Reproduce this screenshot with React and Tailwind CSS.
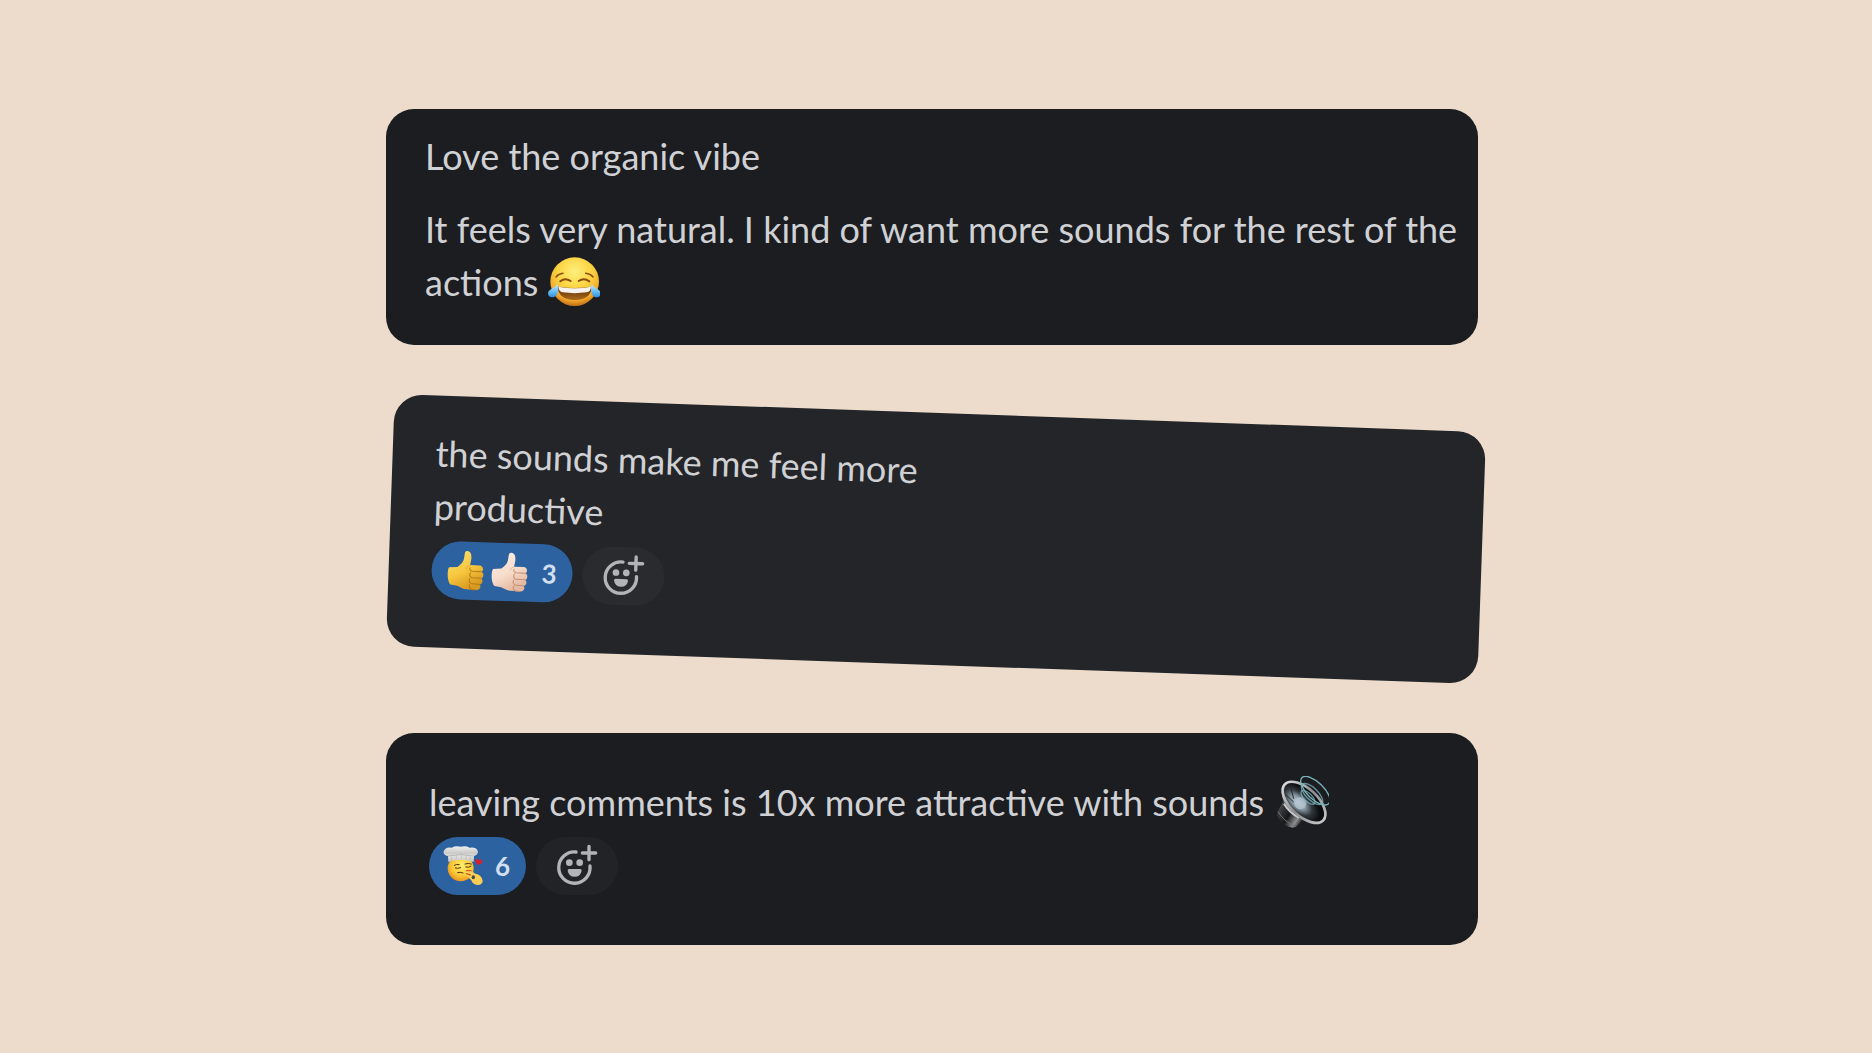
import { useId } from "react";

function JoyEmoji() {
  const id = useId();
  const face = `${id}f`;
  const tear = `${id}t`;
  const mouth = `${id}m`;
  return (
    <svg role="img" aria-label="face with tears of joy" viewBox="54 46 156 156" className="inline-block size-[52px] align-top">
      <defs>
        <radialGradient id={face} cx="0.5" cy="0.3" r="0.72">
          <stop offset="0" stopColor="#fdf07c" />
          <stop offset="0.5" stopColor="#fbd23f" />
          <stop offset="0.82" stopColor="#f0a52c" />
          <stop offset="1" stopColor="#b8650f" />
        </radialGradient>
        <linearGradient id={tear} x1="0" y1="0" x2="0" y2="1">
          <stop offset="0" stopColor="#c4e9fb" />
          <stop offset="0.5" stopColor="#6fc2f3" />
          <stop offset="1" stopColor="#2f8fe0" />
        </linearGradient>
        <linearGradient id={mouth} x1="0" y1="0" x2="0" y2="1">
          <stop offset="0" stopColor="#5a2a08" />
          <stop offset="1" stopColor="#a86a1a" />
        </linearGradient>
      </defs>
      <circle cx="134" cy="123" r="73" fill={`url(#${face})`} />
      <g fill="none" stroke="#8a4d0d" strokeWidth="4.5" strokeLinecap="round">
        <path d="M78 109Q86 99 99 98" />
        <path d="M167 98Q181 99 189 109" />
        <path d="M91 122Q105 110 122 121" strokeWidth="6" />
        <path d="M146 121Q162 110 178 122" strokeWidth="6" />
      </g>
      <path d="M83 138Q134 146 185 138Q184 176 134 178Q85 176 83 138Z" fill={`url(#${mouth})`} />
      <path d="M85 138Q134 147 183 138Q182 153 170 155Q134 160 98 155Q86 152 85 138Z" fill="#f8f3ef" />
      <path d="M82 131C88 147 84 168 68 170C54 171 50 156 59 149C67 143 76 139 82 131Z" fill={`url(#${tear})`} />
      <path d="M185 131C180 147 184 168 198 170C213 171 216 156 207 149C199 143 190 139 185 131Z" fill={`url(#${tear})`} />
    </svg>
  );
}

function SpeakerEmoji() {
  const id = useId();
  const rim = `${id}r`;
  const cone = `${id}c`;
  const base = `${id}b`;
  return (
    <svg role="img" aria-label="speaker with sound waves" viewBox="54 33 156 156" className="ml-1 inline-block size-[52px] align-top">
      <defs>
        <linearGradient id={rim} x1="0" y1="0" x2="1" y2="0">
          <stop offset="0" stopColor="#d6d7d8" />
          <stop offset="0.5" stopColor="#8b8c8e" />
          <stop offset="1" stopColor="#c4c5c5" />
        </linearGradient>
        <radialGradient id={cone} cx="0.42" cy="0.65" r="0.5">
          <stop offset="0" stopColor="#c5d4df" />
          <stop offset="0.35" stopColor="#8796a1" />
          <stop offset="0.65" stopColor="#30363b" />
          <stop offset="1" stopColor="#0c0d0f" />
        </radialGradient>
        <linearGradient id={base} x1="0" y1="0" x2="1" y2="0.6">
          <stop offset="0" stopColor="#d5d5d5" />
          <stop offset="0.2" stopColor="#3d3e40" />
          <stop offset="0.55" stopColor="#17181a" />
          <stop offset="0.85" stopColor="#8d8e90" />
          <stop offset="1" stopColor="#333" />
        </linearGradient>
      </defs>
      <path d="M72 112L57 139Q51 151 62 165Q77 185 101 188Q112 188 119 178L134 162Z" fill={`url(#${base})`} />
      <path d="M58 140Q71 168 111 185" fill="none" stroke="#717274" strokeWidth="3" />
      <path d="M69 78Q67 116 95 145Q115 164 139 162L185 168L166 148L96 88Z" fill="#67696c" />
      <path d="M75 116Q91 143 120 158" fill="none" stroke="#c9cacb" strokeWidth="6" />
      <ellipse cx="135" cy="112" rx="79" ry="41" transform="rotate(43 135 112)" fill={`url(#${cone})`} stroke={`url(#${rim})`} strokeWidth="8" />
      <path d="M104 101L94 62M104 111L79 88" stroke="#25292d" strokeWidth="3" />
      <circle cx="124" cy="115" r="18" fill="#b4c5d1" fillOpacity="0.75" />
      <g fill="none" stroke="#78b3bb" strokeWidth="4">
        <ellipse cx="169" cy="77" rx="56" ry="25" transform="rotate(44 169 77)" />
        <ellipse cx="159" cy="87" rx="41" ry="18" transform="rotate(44 159 87)" strokeOpacity="0.8" />
        <ellipse cx="147" cy="97" rx="27" ry="12" transform="rotate(44 147 97)" strokeOpacity="0.8" />
      </g>
    </svg>
  );
}

function ThumbEmoji({ label, light, base, shade, line }) {
  const id = useId();
  return (
    <svg role="img" aria-label={label} viewBox="78 65 120 120" className="size-10">
      <defs>
        <linearGradient id={id} x1="0" y1="0" x2="0.5" y2="1">
          <stop offset="0" stopColor={light} />
          <stop offset="0.6" stopColor={base} />
          <stop offset="1" stopColor={shade} />
        </linearGradient>
      </defs>
      <path
        d="M134 72C136 63 151 65 153 77C156 89 152 99 151 108L179 108C190 108 194 121 186 127C195 132 192 144 186 147C193 153 189 163 182 165C187 173 182 182 172 182L143 181C132 181 123 174 114 171L94 168C84 160 82 128 88 117L113 115C122 108 131 99 132 89Z"
        fill={`url(#${id})`}
      />
      <g fill="none" stroke={line} strokeWidth="3" strokeLinecap="round">
        <path d="M186 127L158 126Q148 124 151 116" />
        <path d="M186 146L157 146Q147 140 153 130" />
        <path d="M182 165L155 163Q147 157 151 149" />
        <path d="M151 167Q149 176 158 181L171 182" />
      </g>
      <path d="M151 108Q141 111 139 121" fill="none" stroke={line} strokeWidth="2" strokeOpacity="0.5" />
    </svg>
  );
}

function ChefKissEmoji() {
  const id = useId();
  const face = `${id}f`;
  const hat = `${id}h`;
  return (
    <svg role="img" aria-label="chef's kiss" viewBox="69 65 120 120" className="size-10">
      <defs>
        <radialGradient id={face} cx="0.55" cy="0.4" r="0.7">
          <stop offset="0" stopColor="#fff06e" />
          <stop offset="0.55" stopColor="#fbc935" />
          <stop offset="1" stopColor="#df7f1b" />
        </radialGradient>
        <linearGradient id={hat} x1="0" y1="0" x2="0" y2="1">
          <stop offset="0" stopColor="#f1f1ef" />
          <stop offset="0.45" stopColor="#c9c9c8" />
          <stop offset="0.6" stopColor="#e4e4e2" />
          <stop offset="1" stopColor="#c2c2c2" />
        </linearGradient>
      </defs>
      <circle cx="122" cy="132" r="39" fill={`url(#${face})`} />
      <path d="M85 113L84 95Q69 93 71 81Q77 66 95 70Q107 64 122 67Q137 63 149 70Q168 67 173 79Q177 90 162 95L161 113Q122 100 85 113Z" fill={`url(#${hat})`} />
      <path d="M84 95Q121 87 162 95" fill="none" stroke="#a5a5a5" strokeWidth="2" />
      <g stroke="#b9b9b9" strokeWidth="2">
        <path d="M95 96V107M109 94V104M124 93V104M138 94V104M151 96V107" />
      </g>
      <g fill="none" stroke="#553312" strokeWidth="3" strokeLinecap="round">
        <path d="M103 123Q110 118 118 121M135 119Q145 115 154 119" />
        <path d="M106 131Q113 134 122 130M137 128Q145 131 153 126" />
        <path d="M113 145L121 144L129 146" />
      </g>
      <path d="M137 144Q146 132 153 139L166 148Q185 151 188 169Q188 181 173 182Q158 181 154 168L138 153Z" fill="#f9ce55" />
      <ellipse cx="160" cy="159" rx="5" ry="6" fill="#4b4a3b" />
      <path d="M139 139L153 139M139 148L151 152" stroke="#d4631f" strokeWidth="4" strokeLinecap="round" />
      <path d="M174 122C164 116 163 104 171 103Q175 103 177 107Q183 103 187 109Q190 117 174 122Z" fill="#cf2333" />
    </svg>
  );
}

function AddReactionIcon() {
  return (
    <svg aria-hidden="true" viewBox="413 65 120 120" className="size-10 overflow-visible text-[#b3b4b6]">
      <g fill="none" stroke="currentColor" strokeWidth="10" strokeLinecap="round">
        <path d="M470 83A47 47 0 1 0 512 125" />
        <path d="M509 66V106M489 86H529" />
      </g>
      <circle cx="450" cy="115" r="10" fill="currentColor" />
      <circle cx="481" cy="115" r="10" fill="currentColor" />
      <path d="M449 134H483Q487 134 487 139Q484 157 466 157Q448 157 445 139Q445 134 449 134Z" fill="currentColor" />
    </svg>
  );
}

function Reactions({ count, children, addClass }) {
  return (
    <div className="mt-2 flex gap-[10px]">
      <button type="button" className="flex h-[58px] items-center rounded-full bg-[#2d62a0] pr-4 pl-[14px]">
        <span className="flex gap-1">{children}</span>
        <span className="ml-3 text-[26px] leading-none font-bold text-[#d2dfee]">{count}</span>
      </button>
      <button type="button" aria-label="Add reaction" className={`flex h-[58px] w-[82px] items-center justify-center rounded-full ${addClass}`}>
        <AddReactionIcon />
      </button>
    </div>
  );
}

export default function App() {
  return (
    <main className="flex min-h-screen items-center justify-center bg-[#eddccc] font-['Lato',sans-serif] text-[36px] leading-[53px] text-[#d0d1d4]">
      <div className="flex w-7/12 flex-col gap-[68px]">
        <article className="mr-1 -ml-1 rounded-[28px] bg-[#1c1d21] pt-[21px] pr-3 pb-9 pl-[39px]">
          <p>Love the organic vibe</p>
          <p className="mt-5">
            It feels very natural. I kind of want more sounds for the rest of the actions <JoyEmoji />
          </p>
        </article>

        <article className="rotate-2 rounded-[28px] bg-[#242529] pt-[31px] pr-10 pb-[49px] pl-[43px]">
          <p className="max-w-[600px]">the sounds make me feel more productive</p>
          <Reactions count={3} addClass="bg-[#2a2b2f]">
            <ThumbEmoji label="thumbs up" light="#fce176" base="#f6c73e" shade="#d99a20" line="#b97a18" />
            <ThumbEmoji label="thumbs up, light skin tone" light="#fdeee4" base="#f8ddcc" shade="#e4b9a1" line="#c58f76" />
          </Reactions>
        </article>

        <article className="mr-1 -ml-1 rounded-[28px] bg-[#1c1d21] pt-[43px] pr-10 pb-[50px] pl-[43px]">
          <p>
            leaving comments is 10x more attractive with sounds <SpeakerEmoji />
          </p>
          <Reactions count={6} addClass="bg-[#222327]">
            <ChefKissEmoji />
          </Reactions>
        </article>
      </div>
    </main>
  );
}
